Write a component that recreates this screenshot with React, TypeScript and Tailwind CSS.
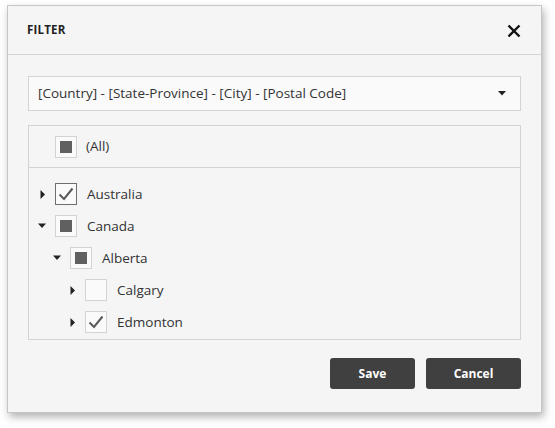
import React from "react";

const font = { fontFamily: '"Segoe UI", "Open Sans", "Noto Sans", sans-serif' };

function Arrow({ open }: { open: boolean }) {
  return (
    <div className="w-[15px] h-[22px] flex items-center justify-start shrink-0">
      {open ? (
        <svg width="9" height="6" viewBox="0 0 9 6" className="-ml-[2px]"><path d="M0 0.5 L8 0.5 L4 5 Z" fill="#222" /></svg>
      ) : (
        <svg width="6" height="9" viewBox="0 0 6 9"><path d="M0.5 0 L0.5 9 L5 4.5 Z" fill="#222" /></svg>
      )}
    </div>
  );
}

function Check({ state, focus }: { state: "checked" | "ind" | "none"; focus?: boolean }) {
  return (
    <div
      className={`w-[22px] h-[22px] shrink-0 border flex items-center justify-center bg-[#fafafa] ${
        focus ? "border-[#6e6e6e]" : "border-[#d3d3d3]"
      }`}
    >
      {state === "ind" && <div className="w-[12px] h-[12px] bg-[#606060]" />}
      {state === "checked" && (
        <svg width="16" height="14" viewBox="0 0 16 14">
          <path d="M1.5 7.5 L6 12 L14.5 1.5" stroke="#5a5a5a" strokeWidth="2" fill="none" />
        </svg>
      )}
    </div>
  );
}

function Row({
  level,
  open,
  state,
  label,
  focus,
}: {
  level: number;
  open: boolean;
  state: "checked" | "ind" | "none";
  label: string;
  focus?: boolean;
}) {
  return (
    <div className="flex items-center h-[32px]" style={{ paddingLeft: 11 + level * 15 }}>
      <Arrow open={open} />
      <Check state={state} focus={focus} />
      <span className="ml-[10px] text-[13.5px] text-[#333]">{label}</span>
    </div>
  );
}

export default function App() {
  return (
    <div className="w-[555px] h-[428px] bg-white relative" style={font}>
      <div className="absolute left-[7px] top-[5px] w-[535px] h-[408px] bg-[#f5f5f5] border border-[#c6c6c6] shadow-[2px_4px_8px_rgba(0,0,0,0.3)] flex flex-col">
        <div className="h-[49px] flex items-center justify-between px-[19px] border-b border-[#d4d4d4] shrink-0">
          <span className="text-[11.5px] font-bold text-[#222] tracking-[0.2px]">FILTER</span>
          <svg width="14" height="14" viewBox="0 0 14 14" className="mr-[1px] mt-[2px]">
            <path d="M1.5 1.5 L12.5 12.5 M12.5 1.5 L1.5 12.5" stroke="#111" strokeWidth="2.4" />
          </svg>
        </div>
        <div className="flex flex-col px-[20px] pt-[21px]">
          <div className="h-[35px] border border-[#d3d3d3] bg-[#fafafa] flex items-center justify-between pl-[9px] pr-[14px]">
            <span className="text-[13.5px] text-[#333]">[Country] - [State-Province] - [City] - [Postal Code]</span>
            <svg width="8" height="5" viewBox="0 0 8 5"><path d="M0 0 L8 0 L4 4.5 Z" fill="#222" /></svg>
          </div>
          <div className="mt-[14px] h-[215px] border border-[#d3d3d3] flex flex-col">
            <div className="h-[42px] flex items-center pl-[26px] border-b border-[#d3d3d3] shrink-0">
              <Check state="ind" />
              <span className="ml-[9px] text-[13.5px] text-[#333]">(All)</span>
            </div>
            <div className="pt-[10px]">
              <Row level={0} open={false} state="checked" label="Australia" focus />
              <Row level={0} open={true} state="ind" label="Canada" />
              <Row level={1} open={true} state="ind" label="Alberta" />
              <Row level={2} open={false} state="none" label="Calgary" />
              <Row level={2} open={false} state="checked" label="Edmonton" />
            </div>
          </div>
          <div className="flex justify-end gap-[11px] mt-[18px]">
            <button className="w-[85px] h-[31px] bg-[#404040] rounded-[3px] text-white text-[12px] font-bold">Save</button>
            <button className="w-[95px] h-[31px] bg-[#404040] rounded-[3px] text-white text-[12px] font-bold">Cancel</button>
          </div>
        </div>
      </div>
    </div>
  );
}
